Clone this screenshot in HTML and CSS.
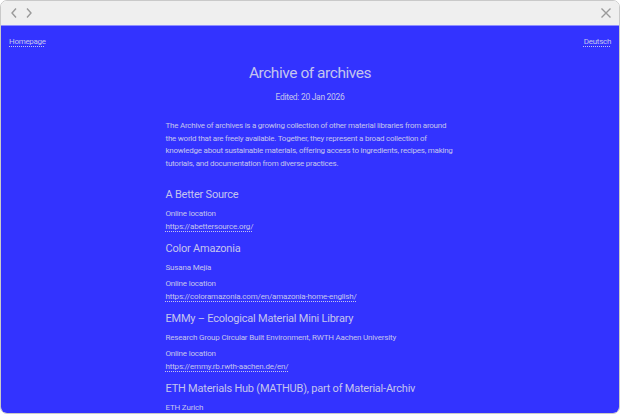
FILE: index.html
```html
<!DOCTYPE html>
<html lang="en">
<head>
  <meta charset="UTF-8" />
  <title>Archive of archives</title>
  <link rel="stylesheet" href="styles.css">
</head>
<body>
  <div class="window">
    <div class="toolbar">
      <div class="arrows">
        <svg width="8" height="12" viewBox="0 0 8 12"><path d="M6 1.5 L2 6 L6 10.5" fill="none" stroke="#9a9a9a" stroke-width="1.4"/></svg>
        <svg width="8" height="12" viewBox="0 0 8 12"><path d="M2 1.5 L6 6 L2 10.5" fill="none" stroke="#9a9a9a" stroke-width="1.4"/></svg>
      </div>
      <svg class="close" width="12" height="12" viewBox="0 0 12 12"><path d="M1.5 1.5 L10.5 10.5 M10.5 1.5 L1.5 10.5" fill="none" stroke="#9a9a9a" stroke-width="1.4"/></svg>
    </div>

    <div class="page">
      <nav>
        <a href="#">Homepage</a>
        <a href="#">Deutsch</a>
      </nav>

      <main class="container">
        <h1>Archive of archives</h1>
        <p class="edited">Edited: 20 Jan 2026</p>
        <p class="intro">The Archive of archives is a growing collection of other material libraries from around the world that are freely available. Together, they represent a broad collection of knowledge about sustainable materials, offering access to ingredients, recipes, making tutorials, and documentation from diverse practices.</p>

        <div class="entry">
          <h2>A Better Source</h2>
          <p>Online location<br><a href="#">https://abettersource.org/</a></p>
        </div>

        <div class="entry">
          <h2>Color Amazonia</h2>
          <p>Susana Mejía</p>
          <p>Online location<br><a href="#">https://coloramazonia.com/en/amazonia-home-english/</a></p>
        </div>

        <div class="entry">
          <h2>EMMy – Ecological Material Mini Library</h2>
          <p>Research Group Circular Built Environment, RWTH Aachen University</p>
          <p>Online location<br><a href="#">https://emmy.rb.rwth-aachen.de/en/</a></p>
        </div>

        <div class="entry">
          <h2>ETH Materials Hub (MATHUB), part of Material-Archiv</h2>
          <p>ETH Zurich</p>
          <p>Online location<br><a href="#">https://mathub.ethz.ch/</a></p>
        </div>
      </main>
    </div>
  </div>
</body>
</html>
```

FILE: styles.css
```css
html, body {
  height: 100%;
}

body {
  margin: 0;
  background: #ffffff;
  font-family: Roboto, Arial, sans-serif;
  color: #c4c4ee;
}

.window {
  box-sizing: border-box;
  height: 100%;
  border: 1px solid #c9c9c9;
  border-radius: 7px;
  overflow: hidden;
  display: flex;
  flex-direction: column;
}

.toolbar {
  flex: none;
  height: 24px;
  background: #efefef;
  border-bottom: 1px solid #8f8fff;
  display: flex;
  align-items: center;
  justify-content: space-between;
  padding: 0 7px 0 9px;
}

.arrows {
  display: flex;
  gap: 7px;
}

.arrows svg,
.close {
  display: block;
}

.page {
  flex: 1;
  background: #3333ff;
  padding: 9px 8px 0;
  overflow: hidden;
}

nav {
  display: flex;
  justify-content: space-between;
  font-size: 8px;
  line-height: 13px;
  letter-spacing: -0.3px;
}

a {
  color: #c4c4ee;
  text-decoration: underline dotted;
  text-underline-offset: 2px;
}

.container {
  max-width: 289px;
  margin: 0 auto;
}

h1 {
  font-weight: 400;
  font-size: 15.5px;
  line-height: 20px;
  letter-spacing: -0.45px;
  text-align: center;
  margin: 15px 0 0;
}

.edited {
  font-size: 8.5px;
  line-height: 13px;
  letter-spacing: -0.3px;
  text-align: center;
  margin: 8px 0 0;
}

.intro {
  font-size: 8px;
  line-height: 12.5px;
  letter-spacing: -0.24px;
  margin: 16px 0 17px;
}

.entry {
  margin-bottom: 8.5px;
}

.entry h2 {
  font-weight: 400;
  font-size: 11px;
  line-height: 15px;
  letter-spacing: -0.22px;
  margin: 0 0 4.5px;
}

.entry p {
  font-size: 8px;
  line-height: 13px;
  letter-spacing: -0.18px;
  margin: 0 0 3px;
}
```
